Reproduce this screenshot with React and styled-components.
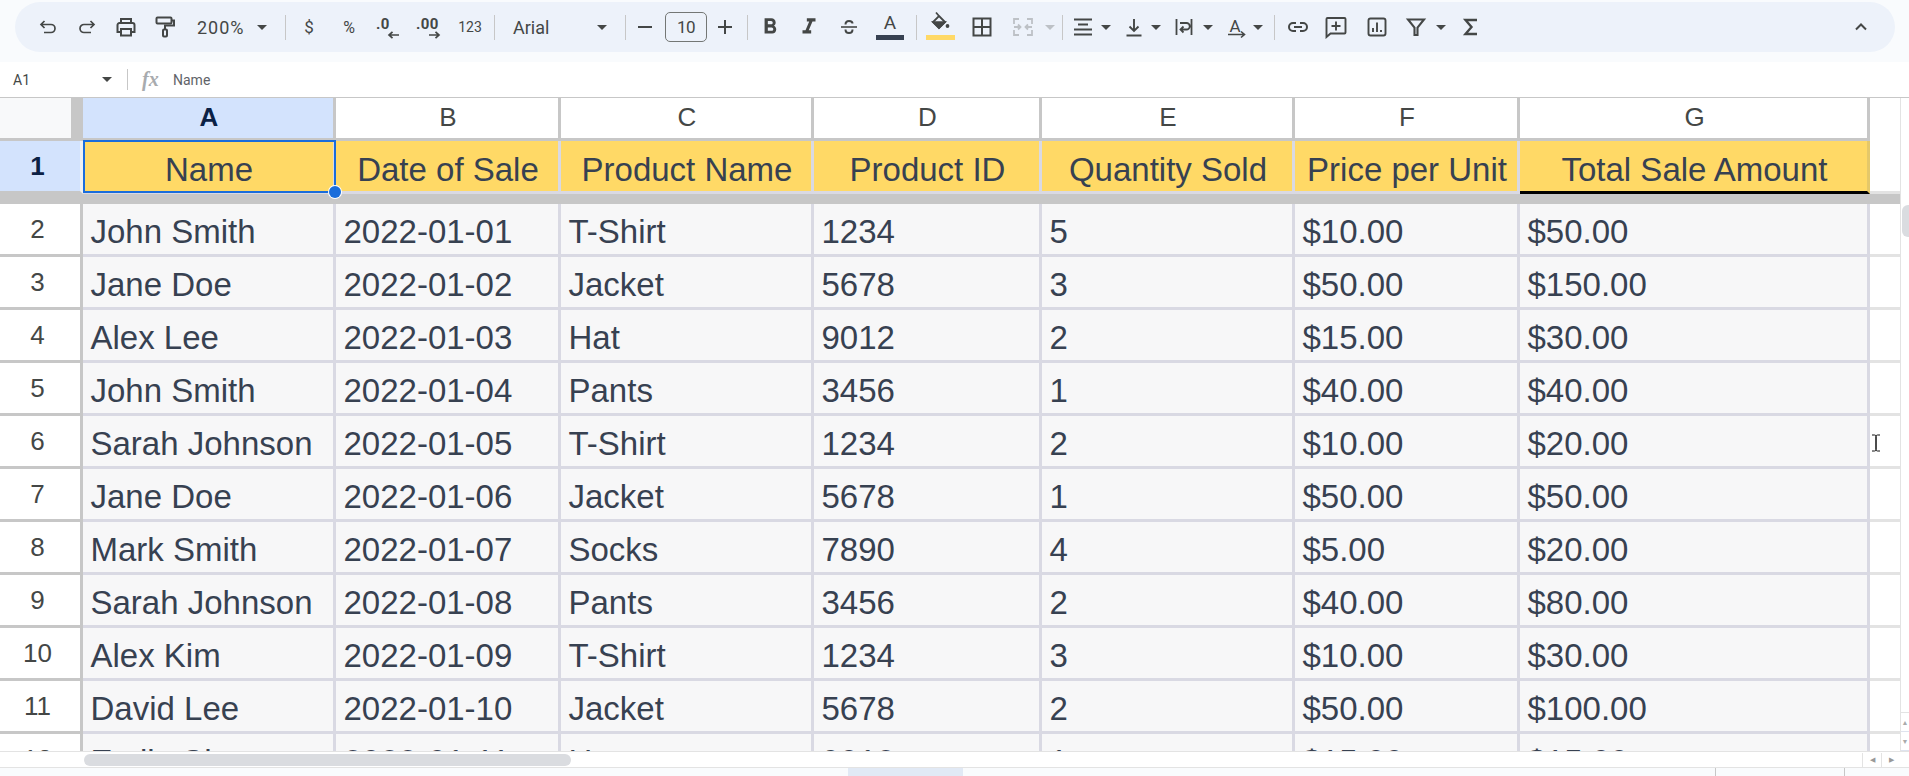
import React from 'react';
import styled, { createGlobalStyle } from 'styled-components';
import { MdFormatBold, MdFormatItalic } from 'react-icons/md';

const GlobalStyle = createGlobalStyle`
  html, body {
    margin: 0;
    padding: 0;
    background: #fff;
    overflow: hidden;
  }
  * { box-sizing: border-box; }
`;

const COLUMNS = '83px 253px 225px 253px 228px 253px 225px 350px 30px';
const ICON = '#444746';
const TEXT = '#374151';

const Page = styled.div`
  position: relative;
  width: 1909px;
  height: 776px;
  display: flex;
  flex-direction: column;
  overflow: hidden;
  font-family: "Liberation Sans", Arial, sans-serif;
`;

const TopBar = styled.div`
  height: 62px;
  flex: none;
  padding: 2px 14px 0 15px;
  background: #f9fbfd;
`;

const Toolbar = styled.div`
  height: 50px;
  display: flex;
  align-items: center;
  padding: 0 19px 0 14px;
  border-radius: 25px;
  background: #edf2fa;
  font-family: Roboto, sans-serif;
  color: ${ICON};
`;

const Tool = styled.div`
  flex: none;
  width: ${p => p.$w}px;
  margin-left: ${p => p.$ml || 0}px;
  height: 50px;
  display: flex;
  align-items: center;
  justify-content: center;
  font-size: ${p => p.$size || 14}px;
  font-weight: ${p => p.$weight || 400};
`;

const SelectTool = styled(Tool)`
  justify-content: space-between;
  padding: 0 14px;
  font-size: 18px;
`;

const ZoomLabel = styled.span`
  letter-spacing: 1px;
`;

const ColorTool = styled(Tool)`
  flex-direction: column;
  justify-content: flex-start;
  padding-top: 9px;
`;

const ColorBar = styled.div`
  width: ${p => p.$w}px;
  height: 5px;
  flex: none;
  background: ${p => p.$color};
`;

const ColorLetter = styled.div`
  height: 24px;
  line-height: 24px;
  font-size: 19px;
`;

const Caret = styled.span`
  display: block;
  width: 0;
  height: 0;
  border-left: 5px solid transparent;
  border-right: 5px solid transparent;
  border-top: 5px solid ${p => p.$off ? '#bdc1c6' : ICON};
`;

const Sep = styled.div`
  flex: none;
  width: 1px;
  height: 25px;
  margin: 0 4px 0 ${p => p.$gap ?? 4}px;
  background: #c7c7c7;
`;

const SizeBox = styled.div`
  flex: none;
  width: 42px;
  height: 30px;
  margin: 0 5px;
  display: flex;
  align-items: center;
  justify-content: center;
  border: 1px solid #747775;
  border-radius: 5px;
  font-size: 17px;
  letter-spacing: -0.6px;
`;

const CollapseTool = styled(Tool)`
  margin-left: auto;
`;

const FormulaBar = styled.div`
  height: 36px;
  flex: none;
  display: flex;
  align-items: center;
  background: #fff;
  border-bottom: 1px solid #c7c7c7;
  font-family: Roboto, sans-serif;
  color: ${ICON};
`;

const NameBox = styled.div`
  width: 112px;
  flex: none;
  padding: 0 0 0 13px;
  display: flex;
  align-items: center;
  justify-content: space-between;
  font-size: 14px;
`;

const FormulaSep = styled.div`
  width: 1px;
  height: 21px;
  margin-left: 15px;
  background: #c7c7c7;
`;

const FxMark = styled.span`
  margin-left: 14px;
  width: 31px;
  font-family: "Liberation Serif", serif;
  font-style: italic;
  font-weight: 700;
  font-size: 20px;
  color: #a8abae;
`;

const FormulaText = styled.span`
  font-size: 14px;
  color: #5f6368;
`;

const SheetArea = styled.div`
  flex: none;
  height: 653px;
  display: flex;
`;

const GridViewport = styled.div`
  position: relative;
  width: 1900px;
  flex: none;
  overflow: hidden;
`;

const Row = styled.div`
  display: grid;
  grid-template-columns: ${COLUMNS};
  height: ${p => p.$h}px;
`;

const Corner = styled.div`
  background: #f8f9fa;
  border-right: 12px solid #c7c7c7;
  border-bottom: 3px solid #c7c7c7;
`;

const ColHead = styled.div`
  display: flex;
  align-items: center;
  justify-content: center;
  padding: 0 0 2px 2px;
  font-size: 26px;
  font-weight: ${p => p.$active ? 700 : 400};
  color: ${p => p.$active ? '#0b2145' : ICON};
  background: ${p => p.$active ? '#d3e3fd' : '#fff'};
  border-right: 3px solid #c7c7c7;
  border-bottom: 3px solid #c7c7c7;
`;

const RowHead = styled.div`
  display: flex;
  align-items: center;
  justify-content: center;
  padding-right: 5px;
  font-size: 26px;
  font-weight: ${p => p.$active ? 700 : 400};
  color: ${p => p.$active ? '#0b2145' : ICON};
  background: ${p => p.$active ? '#d3e3fd' : '#fff'};
  border-right: 3px solid ${p => p.$active ? '#eef0f2' : '#c7c7c7'};
  border-bottom: 3px solid #c7c7c7;
`;

const HeadCell = styled.div`
  display: flex;
  align-items: center;
  justify-content: center;
  padding: 8px 0 0 2px;
  font-size: 33px;
  white-space: nowrap;
  color: ${TEXT};
  background: #ffd966;
  border-right: 3px solid ${p => p.$last ? '#e5c869' : '#d9d9e3'};
  border-bottom: 3px solid ${p => p.$last ? '#000' : '#d9d9e3'};
`;

const Cell = styled.div`
  display: flex;
  align-items: center;
  padding: 6px 0 0 7.5px;
  font-size: 33px;
  white-space: nowrap;
  color: ${TEXT};
  background: #f7f7f8;
  border-right: 3px solid #d9d9e3;
  border-bottom: 3px solid #d9d9e3;
`;

const Tail = styled.div`
  background: #fff;
  border-bottom: ${p => p.$line ? '3px solid #e3e3e3' : 'none'};
`;

const FreezeBar = styled.div`
  height: 10px;
  background: #c7c7c7;
`;

const Selection = styled.div`
  position: absolute;
  left: 83px;
  top: 42px;
  width: 253px;
  height: 53px;
  border: 2px solid #1a6ddb;
  pointer-events: none;
`;

const SelectionDot = styled.div`
  position: absolute;
  right: -7px;
  bottom: -7px;
  width: 12px;
  height: 12px;
  border-radius: 50%;
  background: #1a6ddb;
  box-shadow: 0 0 0 1px #fff;
`;

const VScroll = styled.div`
  position: relative;
  width: 9px;
  flex: none;
  background: #fff;
  border-left: 1px solid #e3e3e3;
`;

const VThumb = styled.div`
  position: absolute;
  left: 1px;
  right: 0;
  top: 107px;
  height: 32px;
  background: #dadce0;
  border-radius: 6px 0 0 6px;
`;

const VArrows = styled.div`
  position: absolute;
  left: 0;
  right: 0;
  bottom: 0;
  height: 39px;
  display: grid;
  grid-template-rows: 1fr 1fr;
  border-top: 1px solid #e3e3e3;
`;

const VArrow = styled.div`
  display: flex;
  align-items: center;
  justify-content: center;
  font-size: 7px;
  color: #aaa;
  border-bottom: 1px solid #dfe3ee;
`;

const HScroll = styled.div`
  position: relative;
  height: 16px;
  flex: none;
  padding: 2px 0 0 84px;
  background: #fff;
  border-top: 1px solid #e3e3e3;
`;

const HThumb = styled.div`
  width: 487px;
  height: 12px;
  border-radius: 6px;
  background: #dadce0;
`;

const HArrows = styled.div`
  position: absolute;
  right: 9px;
  top: 1px;
  width: 38px;
  height: 14px;
  display: grid;
  grid-template-columns: 1fr 1fr;
  font-size: 7px;
  color: #999;
`;

const HArrow = styled.div`
  display: flex;
  align-items: center;
  justify-content: center;
  border-left: 1px solid #e3e3e3;
`;

const BottomBar = styled.div`
  flex: 1;
  display: flex;
  padding-left: 848px;
  background: #f9fbfd;
  border-top: 1px solid #e3e3e3;
`;

const ActiveTab = styled.div`
  width: 115px;
  background: #e1e9f5;
`;

const Divider = styled.div`
  width: 1px;
  margin-left: ${p => p.$ml}px;
  background: #c7c7c7;
`;

const TextCursor = styled.svg`
  position: absolute;
  left: 1869px;
  top: 434px;
`;

const Icon = ({ children, w = 24, h = 24, sw = 1.7, color = ICON }) => (
  <svg width={w} height={h} viewBox={`0 0 ${w} ${h}`} fill="none" stroke={color} strokeWidth={sw}>
    {children}
  </svg>
);

const DecimalIcon = ({ label, dir }) => (
  <svg width="26" height="24" viewBox="0 0 26 24">
    <text x="1" y="14" fontFamily="Roboto, sans-serif" fontWeight="700" fontSize="15" letterSpacing="0.4" fill={ICON}>{label}</text>
    <path
      d={dir === 'left' ? 'M24 20H14M17.5 16.8L14 20l3.5 3.2' : 'M14 20h10M20.5 16.8L24 20l-3.5 3.2'}
      fill="none" stroke={ICON} strokeWidth="1.7"
    />
  </svg>
);

const HEADERS = ['Name', 'Date of Sale', 'Product Name', 'Product ID', 'Quantity Sold', 'Price per Unit', 'Total Sale Amount'];

const SALES = [
  ['John Smith', '2022-01-01', 'T-Shirt', '1234', '5', '$10.00', '$50.00'],
  ['Jane Doe', '2022-01-02', 'Jacket', '5678', '3', '$50.00', '$150.00'],
  ['Alex Lee', '2022-01-03', 'Hat', '9012', '2', '$15.00', '$30.00'],
  ['John Smith', '2022-01-04', 'Pants', '3456', '1', '$40.00', '$40.00'],
  ['Sarah Johnson', '2022-01-05', 'T-Shirt', '1234', '2', '$10.00', '$20.00'],
  ['Jane Doe', '2022-01-06', 'Jacket', '5678', '1', '$50.00', '$50.00'],
  ['Mark Smith', '2022-01-07', 'Socks', '7890', '4', '$5.00', '$20.00'],
  ['Sarah Johnson', '2022-01-08', 'Pants', '3456', '2', '$40.00', '$80.00'],
  ['Alex Kim', '2022-01-09', 'T-Shirt', '1234', '3', '$10.00', '$30.00'],
  ['David Lee', '2022-01-10', 'Jacket', '5678', '2', '$50.00', '$100.00'],
  ['Emily Chen', '2022-01-11', 'Hat', '9012', '1', '$15.00', '$15.00'],
];

function TopToolbar() {
  return (
    <TopBar>
      <Toolbar>
        <Tool $w={38}>
          <Icon><path d="M8.5 6L5 9.5 8.5 13M5 9.5h10a4 4 0 0 1 0 8H8" /></Icon>
        </Tool>
        <Tool $w={39}>
          <Icon><path d="M15.5 6L19 9.5 15.5 13M19 9.5H9a4 4 0 0 0 0 8h7" /></Icon>
        </Tool>
        <Tool $w={40}>
          <Icon sw={2}>
            <path d="M7 8V4h10v4M7 17H3.5v-7a2 2 0 0 1 2-2h13a2 2 0 0 1 2 2v7H17" />
            <path d="M7 14h10v6.5H7z" />
          </Icon>
        </Tool>
        <Tool $w={37}>
          <Icon sw={2}>
            <rect x="3.5" y="2.5" width="15" height="6" rx="1" />
            <path d="M18.5 5.5h2.5v5h-9v3.5" />
            <rect x="10" y="14.5" width="4" height="7" rx="1" />
          </Icon>
        </Tool>
        <SelectTool $w={98}>
          <ZoomLabel>200%</ZoomLabel>
          <Caret />
        </SelectTool>
        <Sep />
        <Tool $w={38} $size={17}>$</Tool>
        <Tool $w={42} $size={16}>%</Tool>
        <Tool $w={36}><DecimalIcon label=".0" dir="left" /></Tool>
        <Tool $w={44}><DecimalIcon label=".00" dir="right" /></Tool>
        <Tool $w={40} $size={14}>123</Tool>
        <Sep />
        <SelectTool $w={122}>
          <span>Arial</span>
          <Caret />
        </SelectTool>
        <Sep />
        <Tool $w={30}><Icon sw={2}><path d="M5 12h14" /></Icon></Tool>
        <SizeBox>10</SizeBox>
        <Tool $w={26}><Icon sw={2}><path d="M5 12h14M12 5v14" /></Icon></Tool>
        <Sep $gap={9} />
        <Tool $w={36}><MdFormatBold size={26} /></Tool>
        <Tool $w={42}><MdFormatItalic size={26} /></Tool>
        <Tool $w={38}>
          <Icon>
            <path d="M4 12h16" strokeWidth="1.6" />
            <path d="M8.5 9.5C8.5 7 10 6 12 6s3.5 1 3.5 2.5M15.5 14.5c0 2.5-1.5 3.5-3.5 3.5s-3.5-1-3.5-3.5" strokeWidth="2" />
          </Icon>
        </Tool>
        <ColorTool $w={44}>
          <ColorLetter>A</ColorLetter>
          <ColorBar $w={28} $color={TEXT} />
        </ColorTool>
        <Sep />
        <ColorTool $w={38}>
          <Icon>
            <path d="M11 5l6 6-6 6-6-6zM8 1.5L11 5" strokeWidth="1.8" />
            <path d="M5 11h12l-6 6z" fill={ICON} />
            <circle cx="19.5" cy="15" r="1.9" fill={ICON} stroke="none" />
          </Icon>
          <ColorBar $w={29} $color="#ffd966" />
        </ColorTool>
        <Tool $w={46}>
          <Icon sw={2}><path d="M3.5 3.5h17v17h-17zM12 3.5v17M3.5 12h17" /></Icon>
        </Tool>
        <Tool $w={36}>
          <Icon color="#bdc1c6" sw={1.8}>
            <path d="M3 9V4h5M16 4h5v5M3 15v5h5M16 20h5v-5M3 12h6M7 9.5L9.5 12 7 14.5M21 12h-6M17 9.5L14.5 12l2.5 2.5" />
          </Icon>
        </Tool>
        <Tool $w={17}><Caret $off /></Tool>
        <Sep />
        <Tool $w={32}>
          <Icon sw={2}><path d="M3 4.5h18M7 9.5h10M3 14.5h18M3 19.5h18" /></Icon>
        </Tool>
        <Tool $w={14}><Caret /></Tool>
        <Tool $w={24} $ml={9}>
          <Icon sw={1.9}><path d="M12 4v12M7.5 11.5L12 16l4.5-4.5M4.5 20.5h15" /></Icon>
        </Tool>
        <Tool $w={20}><Caret /></Tool>
        <Tool $w={24} $ml={6}>
          <Icon sw={1.8}><path d="M4.5 4v16M19.5 4v16M8 8h6.5a3 3 0 0 1 0 6.5H9M11.5 11.5L8.5 14.5l3 3" /></Icon>
        </Tool>
        <Tool $w={24}><Caret /></Tool>
        <Tool $w={32}>
          <svg width="24" height="24" viewBox="0 0 24 24">
            <text x="11" y="16.5" textAnchor="middle" fontFamily="Roboto, sans-serif" fontSize="17" fill={ICON}>A</text>
            <path d="M4 19.5h16M17 16.5l3.5 3-3.5 3" fill="none" stroke={ICON} strokeWidth="1.6" />
          </svg>
        </Tool>
        <Tool $w={12}><Caret /></Tool>
        <Sep $gap={10} />
        <Tool $w={38}>
          <Icon sw={2}><path d="M10 8H7a4 4 0 0 0 0 8h3M14 8h3a4 4 0 0 1 0 8h-3M8 12h8" /></Icon>
        </Tool>
        <Tool $w={38}>
          <Icon sw={1.9}><path d="M2.5 22V4a1 1 0 0 1 1-1h17a1 1 0 0 1 1 1v13.5a1 1 0 0 1-1 1H6.5zM12 6.5v9M7.5 11h9" /></Icon>
        </Tool>
        <Tool $w={44}>
          <Icon sw={1.9}>
            <rect x="3.5" y="3.5" width="17" height="17" rx="2" />
            <path d="M8 17v-4M12 17V7.5M16 17v-2" />
          </Icon>
        </Tool>
        <Tool $w={34}>
          <Icon sw={2.1}><path d="M4 4.5h16l-6.5 8V20h-3v-7.5z" /></Icon>
        </Tool>
        <Tool $w={16}><Caret /></Tool>
        <Tool $w={44}>
          <Icon sw={2.4}><path d="M18 5H6.5l6 7-6 7H18" /></Icon>
        </Tool>
        <CollapseTool $w={30}>
          <Icon sw={2}><path d="M7 14.5l5-5 5 5" /></Icon>
        </CollapseTool>
      </Toolbar>
    </TopBar>
  );
}

export default function App() {
  return (
    <Page>
      <GlobalStyle />
      <TopToolbar />
      <FormulaBar>
        <NameBox>
          <span>A1</span>
          <Caret />
        </NameBox>
        <FormulaSep />
        <FxMark>fx</FxMark>
        <FormulaText>Name</FormulaText>
      </FormulaBar>
      <SheetArea>
        <GridViewport>
          <Row $h={43}>
            <Corner />
            {'ABCDEFG'.split('').map((l, i) => <ColHead key={l} $active={i === 0}>{l}</ColHead>)}
            <Tail />
          </Row>
          <Row $h={53}>
            <RowHead $active>1</RowHead>
            {HEADERS.map((h, i) => <HeadCell key={h} $last={i === HEADERS.length - 1}>{h}</HeadCell>)}
            <Tail $line />
          </Row>
          <FreezeBar />
          {SALES.map((row, i) => (
            <Row key={i} $h={53}>
              <RowHead>{i + 2}</RowHead>
              {row.map((v, j) => <Cell key={j}>{v}</Cell>)}
              <Tail $line />
            </Row>
          ))}
          <Selection><SelectionDot /></Selection>
        </GridViewport>
        <VScroll>
          <VThumb />
          <VArrows>
            <VArrow>▲</VArrow>
            <VArrow>▼</VArrow>
          </VArrows>
        </VScroll>
      </SheetArea>
      <HScroll>
        <HThumb />
        <HArrows>
          <HArrow>◀</HArrow>
          <HArrow>▶</HArrow>
        </HArrows>
      </HScroll>
      <BottomBar>
        <ActiveTab />
        <Divider $ml={752} />
        <Divider $ml={128} />
      </BottomBar>
      <TextCursor width="14" height="18" viewBox="0 0 14 18" fill="none" stroke="#111" strokeWidth="1">
        <path d="M3 1h2.5a1.5 1.5 0 0 1 1.5 1.5v13a1.5 1.5 0 0 1-1.5 1.5H3M11 1H8.5A1.5 1.5 0 0 0 7 2.5v13A1.5 1.5 0 0 0 8.5 17H11" />
      </TextCursor>
    </Page>
  );
}
